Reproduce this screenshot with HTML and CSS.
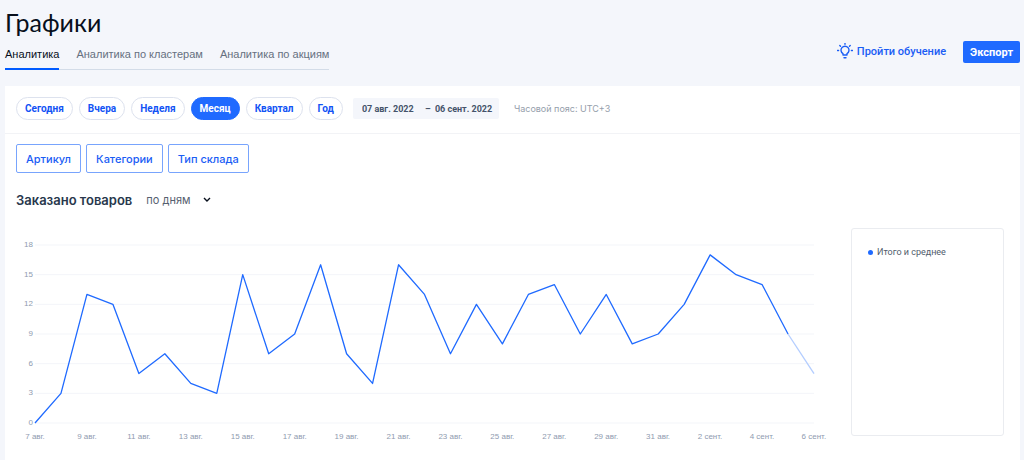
FILE: index.html
```html
<!DOCTYPE html>
<html lang="ru">
<head>
<meta charset="utf-8">
<meta name="viewport" content="width=device-width, initial-scale=1">
<title>Графики</title>
<link rel="stylesheet" href="styles.css">
</head>
<body>
<header class="header">
  <div>
    <h1 class="title">Графики</h1>
    <nav class="tabs">
      <a class="tab tab-active" href="#analytics">Аналитика</a>
      <a class="tab" href="#clusters">Аналитика по кластерам</a>
      <a class="tab" href="#promo">Аналитика по акциям</a>
    </nav>
  </div>
  <div class="actions">
    <a class="learn" href="#learn">
      <svg class="bulb" viewBox="0 0 16 16" aria-hidden="true">
        <path d="M6 12v-1.300A4 4 0 1 1 10 10.700V12z"/>
        <path d="M7 14.800h2M8 .4v.8M2.800 2.500l.7.700M13.200 2.500l-.7.700M.4 7.500h1.200M14.400 7.500h1.200"/>
      </svg>
      <span>Пройти обучение</span>
    </a>
    <button class="export" type="button">Экспорт</button>
  </div>
</header>
<main class="card">
  <section class="period">
    <div class="pills">
      <button class="pill" type="button">Сегодня</button>
      <button class="pill" type="button">Вчера</button>
      <button class="pill" type="button">Неделя</button>
      <button class="pill pill-active" type="button">Месяц</button>
      <button class="pill" type="button">Квартал</button>
      <button class="pill" type="button">Год</button>
    </div>
    <div class="range">
      <input class="date" type="text" value="07 авг. 2022" aria-label="Начало периода">
      <span class="dash">–</span>
      <input class="date" type="text" value="06 сент. 2022" aria-label="Конец периода">
    </div>
    <span class="zone">Часовой пояс: UTC+3</span>
  </section>
  <section class="filters">
    <button class="filter" type="button">Артикул</button>
    <button class="filter" type="button">Категории</button>
    <button class="filter" type="button">Тип склада</button>
  </section>
  <section class="metric">
    <h2 class="metric-title">Заказано товаров</h2>
    <div class="select-wrap">
      <select class="select" aria-label="Группировка">
        <option>по дням</option>
      </select>
      <svg class="chevron" viewBox="0 0 8 6" aria-hidden="true"><path d="M1 1l3 3 3-3"/></svg>
    </div>
  </section>
  <section class="report">
    <div class="chart">
      <div class="y-axis"><span>18</span><span>15</span><span>12</span><span>9</span><span>6</span><span>3</span><span>0</span></div>
      <svg class="plot" viewBox="0 0 30 18" preserveAspectRatio="none" role="img" aria-label="Заказано товаров по дням">
        <path class="grid" d="M0 0H30M0 3H30M0 6H30M0 9H30M0 12H30M0 15H30M0 18H30"/>
        <path class="line line-pending" d="M29 9L30 13"/>
        <path class="line" d="M0 18L1 15L2 5L3 6L4 13L5 11L6 14L7 15L8 3L9 11L10 9L11 2L12 11L13 14L14 2L15 5L16 11L17 6L18 10L19 5L20 4L21 9L22 5L23 10L24 9L25 6L26 1L27 3L28 4L29 9"/>
      </svg>
      <div class="x-axis"><span>7 авг.</span><span>9 авг.</span><span>11 авг.</span><span>13 авг.</span><span>15 авг.</span><span>17 авг.</span><span>19 авг.</span><span>21 авг.</span><span>23 авг.</span><span>25 авг.</span><span>27 авг.</span><span>29 авг.</span><span>31 авг.</span><span>2 сент.</span><span>4 сент.</span><span>6 сент.</span></div>
    </div>
    <aside class="legend">
      <div class="legend-item"><span class="dot"></span>Итого и среднее</div>
    </aside>
  </section>
</main>
</body>
</html>
```

FILE: styles.css
```css
* { box-sizing: border-box; }
html { min-height: 100%; background: #f4f6fb; }
body {
  display: flex;
  flex-direction: column;
  min-height: 100vh;
  margin: 0;
  padding: 0 4px 0 5px;
  background: #f4f6fb;
  color: #001a34;
  font-family: Roboto, Inter, "Liberation Sans", sans-serif;
  font-size: 11px;
}
button, input, select { font: inherit; color: inherit; }
button { cursor: pointer; white-space: nowrap; }
a { color: inherit; text-decoration: none; }

.header {
  display: flex;
  justify-content: space-between;
  align-items: flex-start;
  padding: 7px 0 16px;
}
.title {
  margin: 0;
  font-family: Lato, Inter, sans-serif;
  font-size: 25px;
  line-height: 30px;
  font-weight: 400;
  color: #070f1c;
}
.tabs {
  display: flex;
  gap: 17px;
  margin-top: 9px;
  box-shadow: inset 0 -1px #d3dce8;
  font-family: "Liberation Sans", Arial, sans-serif;
}
.tab {
  padding-bottom: 8px;
  line-height: 16px;
  color: #66707f;
}
.tab-active { color: #070f1c; border-bottom: 2px solid #005bff; padding-bottom: 6px; }

.actions { display: flex; align-items: center; gap: 17px; padding-top: 34px; }
.learn {
  display: flex;
  align-items: center;
  gap: 4px;
  padding-bottom: 2px;
  color: #1a5df5;
  font-weight: 500;
}
.bulb {
  width: 16px;
  height: 16px;
  fill: none;
  stroke: #1a5df5;
  stroke-width: 1.4;
  stroke-linecap: round;
  stroke-linejoin: round;
}
.export {
  height: 22px;
  padding: 0 7px;
  border: 0;
  border-radius: 2px;
  background: #1f6aff;
  color: #fff;
  font-weight: 700;
}

.card { flex: 1; background: #fff; }
.period {
  display: flex;
  align-items: center;
  height: 48px;
  padding: 0 11px 2px;
  border-bottom: 1px solid #f2f3f6;
}
.pills { display: flex; gap: 6px; }
.pill {
  height: 23px;
  padding: 0 8px;
  border: 1px solid #dde2ee;
  border-radius: 12px;
  background: #fff;
  color: #1253f5;
  font-size: 10px;
  font-weight: 700;
}
.pill-active { border-color: #1f6aff; background: #1f6aff; color: #fff; }
.range {
  display: flex;
  align-items: center;
  height: 21px;
  margin-left: 10px;
  padding: 0 5px 0 9px;
  border-radius: 2px;
  background: #f4f6fb;
  color: #44536a;
  font-size: 9px;
  font-weight: 700;
}
.date { width: 59px; padding: 0; border: 0; background: none; }
.dash { width: 14px; text-align: center; }
.zone { margin-left: 15px; color: #959eab; font-family: Inter, sans-serif; font-size: 9px; }

.filters { display: flex; gap: 5px; padding: 10px 11px 0; }
.filter {
  height: 29px;
  padding: 0 9px;
  border: 1px solid #78a4fd;
  border-radius: 2px;
  background: #fff;
  color: #1a5df5;
  font-family: Inter, sans-serif;
  font-weight: 500;
}

.metric {
  display: flex;
  align-items: center;
  gap: 14px;
  padding: 17px 11px 0;
  font-family: Inter, sans-serif;
}
.metric-title {
  margin: 0;
  font-size: 13px;
  line-height: 20px;
  font-weight: 600;
  color: #28374c;
}
.select-wrap { position: relative; }
.select {
  width: 66px;
  padding: 0;
  border: 0;
  background: none;
  appearance: none;
  color: #56606f;
}
.chevron {
  position: absolute;
  top: 50%;
  right: 1px;
  width: 8px;
  height: 6px;
  margin-top: -3px;
  fill: none;
  stroke: #070f1c;
  stroke-width: 1.4;
  pointer-events: none;
}

.report { display: flex; gap: 37px; padding: 18px 16px 24px 11px; }
.chart {
  flex: 1;
  display: grid;
  grid-template-columns: 17px 1fr;
  grid-template-rows: 178px 12px;
  column-gap: 2px;
  row-gap: 8px;
  padding-top: 17px;
  margin-bottom: -7px;
  color: #8f9bb0;
  font-family: "Liberation Sans", Arial, sans-serif;
  font-size: 8px;
}
.y-axis {
  display: flex;
  flex-direction: column;
  justify-content: space-between;
  text-align: right;
}
.y-axis span { height: 0; line-height: 0; }
.plot { display: block; width: 100%; height: 100%; overflow: visible; }
.grid, .line { fill: none; vector-effect: non-scaling-stroke; }
.grid { stroke: #f3f5f9; stroke-width: 1; }
.line { stroke: #1f6aff; stroke-width: 1.3; stroke-linejoin: round; }
.line-pending { stroke: #b3cdff; }
.x-axis {
  grid-column: 2;
  display: flex;
  justify-content: space-between;
  line-height: 12px;
}
.x-axis span {
  display: flex;
  justify-content: center;
  width: 0;
  white-space: nowrap;
}
.legend {
  width: 153px;
  padding: 16px;
  border: 1px solid #eaecf0;
  border-radius: 3px;
  color: #505b6b;
  font-size: 9px;
  line-height: 14px;
}
.legend-item { display: flex; align-items: center; gap: 4px; }
.dot { width: 5px; height: 5px; border-radius: 50%; background: #1f6aff; }
```
